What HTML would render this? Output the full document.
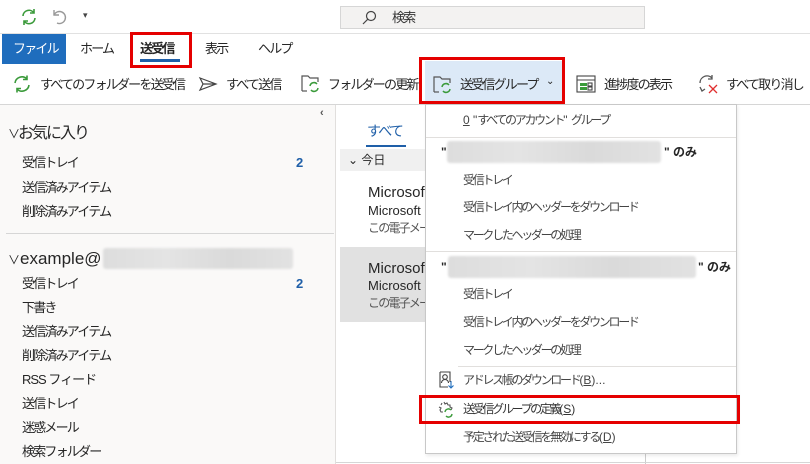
<!DOCTYPE html>
<html><head><meta charset="utf-8"><style>
*{margin:0;padding:0;box-sizing:border-box}
body{width:810px;height:464px;overflow:hidden;background:#fff;font-family:"Liberation Sans","Noto Sans CJK JP",sans-serif;color:#262626;position:relative;font-size:13px;letter-spacing:-1.8px}
.a{position:absolute;white-space:nowrap;line-height:1}
.m{font-size:12px;color:#444;letter-spacing:-2.3px}
.l{letter-spacing:0}
.blur{position:absolute;background:linear-gradient(90deg,#ddd,#e4e4e4,#dadada,#e2e2e2);border-radius:3px;filter:blur(1px)}
.sep{position:absolute;height:1px;background:#e1dfdd}
</style></head><body>
<svg class="a" style="left:19px;top:7px" width="20" height="20" viewBox="0 0 20 20" fill="none" stroke="#3a9a3a" stroke-width="1.6"><path d="M4 9a6 6 0 0 1 11-3M16 11a6 6 0 0 1-11 3"/><path d="M15 2v4h-4M5 18v-4h4"/></svg>
<svg class="a" style="left:50px;top:7px" width="18" height="18" viewBox="0 0 18 18" fill="none" stroke="#999" stroke-width="1.4"><path d="M4 3v5h5"/><path d="M4 8a6 6 0 1 1 3 8"/></svg>
<div class="a" style="left:83px;top:11px;font-size:9px;color:#444">▾</div>
<div class="a" style="left:340px;top:6px;width:305px;height:23px;background:#f3f2f1;border:1px solid #d6d6d6"></div>
<svg class="a" style="left:361px;top:10px" width="16" height="16" viewBox="0 0 16 16" fill="none" stroke="#444" stroke-width="1.2"><circle cx="10" cy="6" r="4.5"/><path d="M6.8 9.2L2 14"/></svg>
<div class="a" style="left:392px;top:11px;font-size:13px;color:#333">検索</div>
<div class="a" style="left:0;top:33px;width:810px;height:1px;background:#e1e1e1"></div>
<div class="a" style="left:2px;top:34px;width:64px;height:30px;background:#1f6dbd"></div>
<div class="a" style="left:13px;top:42px;font-size:13px;color:#fff">ファイル</div>
<div class="a" style="left:80px;top:42px">ホーム</div>
<div class="a" style="left:140px;top:42px;font-weight:bold">送受信</div>
<div class="a" style="left:140px;top:59px;width:40px;height:3px;background:#1f5fa8"></div>
<div class="a" style="left:130px;top:32px;width:62px;height:36px;border:3px solid #e50000"></div>
<div class="a" style="left:205px;top:42px">表示</div>
<div class="a" style="left:258px;top:42px">ヘルプ</div>
<svg class="a" style="left:12px;top:74px" width="20" height="20" viewBox="0 0 20 20" fill="none" stroke="#3a9a3a" stroke-width="1.6"><path d="M3 9a7 7 0 0 1 12-4M17 11a7 7 0 0 1-12 4"/><path d="M15 1.5v4h-4M5 18.5v-4h4"/></svg>
<div class="a" style="left:40px;top:78px">すべてのフォルダーを送受信</div>
<svg class="a" style="left:198px;top:76px" width="20" height="16" viewBox="0 0 20 16" fill="none" stroke="#444" stroke-width="1.2"><path d="M2 2l16 6-16 6 3-6z M5 8h13"/></svg>
<div class="a" style="left:226px;top:78px">すべて送信</div>
<svg class="a" style="left:301px;top:73px" width="20" height="20" viewBox="0 0 20 20" fill="none" stroke-width="1.2"><path d="M1 18V3h6l2 2h8v4" stroke="#555"/><path d="M1 18h5" stroke="#555"/><path d="M9 13a4 4 0 0 1 7-2M17 15a4 4 0 0 1-7 2" stroke="#3a9a3a" stroke-width="1.5"/></svg>
<div class="a" style="left:328px;top:78px">フォルダーの更新</div>
<div class="a" style="left:425px;top:61px;width:138px;height:42px;background:#dce9f7"></div>
<div class="a" style="left:419px;top:57px;width:146px;height:47px;border:3px solid #e50000"></div>
<svg class="a" style="left:433px;top:74px" width="20" height="20" viewBox="0 0 20 20" fill="none" stroke-width="1.2"><path d="M1 18V3h6l2 2h8v4" stroke="#555"/><path d="M1 18h5" stroke="#555"/><path d="M9 13a4 4 0 0 1 7-2M17 15a4 4 0 0 1-7 2" stroke="#3a9a3a" stroke-width="1.5"/></svg>
<div class="a" style="left:460px;top:78px">送受信グループ</div>
<div class="a" style="left:546px;top:77px;font-size:10px;letter-spacing:0">⌄</div>
<svg class="a" style="left:576px;top:75px" width="20" height="18" viewBox="0 0 20 18" fill="none" stroke="#444" stroke-width="1.1"><rect x="1" y="1" width="18" height="16"/><path d="M1 5h18"/><rect x="4" y="8" width="7" height="3" fill="#3a9a3a" stroke="none"/><rect x="4" y="12" width="7" height="3" fill="#3a9a3a" stroke="none"/><rect x="12" y="8" width="4" height="3"/><rect x="12" y="12" width="4" height="3"/></svg>
<div class="a" style="left:604px;top:78px">進捗度の表示</div>
<svg class="a" style="left:697px;top:73px" width="22" height="22" viewBox="0 0 22 22" fill="none" stroke-width="1.3"><path d="M3 10a7 7 0 0 1 12-5" stroke="#555"/><path d="M15 2v4h-4" stroke="#555"/><path d="M3 14l2 4 3-2" stroke="#555"/><path d="M12 12l8 8M20 12l-8 8" stroke="#e03030"/></svg>
<div class="a" style="left:726px;top:78px">すべて取り消し</div>
<div class="a" style="left:0;top:104px;width:810px;height:1px;background:#d6d6d6"></div>
<div class="a" style="left:0;top:105px;width:336px;height:359px;background:#faf9f8;border-right:1px solid #e1dfdd"></div>
<div class="a" style="left:320px;top:108px;font-size:11px;font-weight:bold;color:#555">‹</div>
<div class="a" style="left:8px;top:126px;font-size:16px;letter-spacing:-2px"><span style="font-size:12px">∨</span>お気に入り</div>
<div class="a" style="left:22px;top:156px">受信トレイ</div><div class="a" style="left:296px;top:156px;color:#1f5fa8;font-weight:bold">2</div>
<div class="a" style="left:22px;top:181px">送信済みアイテム</div>
<div class="a" style="left:22px;top:205px">削除済みアイテム</div>
<div class="sep" style="left:6px;top:233px;width:328px;background:#d6d6d6"></div>
<div class="a" style="left:8px;top:250px;font-size:17px;letter-spacing:0"><span style="font-size:12px">∨</span>example@</div>
<div class="blur" style="left:103px;top:248px;width:190px;height:21px"></div>
<div class="a" style="left:22px;top:277px">受信トレイ</div><div class="a" style="left:296px;top:277px;color:#1f5fa8;font-weight:bold">2</div>
<div class="a" style="left:22px;top:301px">下書き</div>
<div class="a" style="left:22px;top:325px">送信済みアイテム</div>
<div class="a" style="left:22px;top:349px">削除済みアイテム</div>
<div class="a" style="left:22px;top:373px;letter-spacing:-1px">RSS フィード</div>
<div class="a" style="left:22px;top:397px">送信トレイ</div>
<div class="a" style="left:22px;top:421px">迷惑メール</div>
<div class="a" style="left:22px;top:445px">検索フォルダー</div>
<div class="a" style="left:367px;top:124px;color:#1f5fa8;font-size:14px">すべて</div>
<div class="a" style="left:366px;top:145px;width:40px;height:2px;background:#1f5fa8"></div>
<div class="a" style="left:340px;top:149px;width:90px;height:22px;background:#f0f0f0"></div>
<div class="a" style="left:348px;top:154px;font-size:12px;letter-spacing:0">⌄ 今日</div>
<div class="a" style="left:368px;top:185px;font-size:15px;letter-spacing:0">Microsoft</div>
<div class="a" style="left:368px;top:204px;letter-spacing:0">Microsoft</div>
<div class="a" style="left:368px;top:222px;font-size:12px;color:#555">この電子メール</div>
<div class="a" style="left:340px;top:247px;width:90px;height:75px;background:#e1e1e1"></div>
<div class="a" style="left:368px;top:261px;font-size:15px;letter-spacing:0">Microsoft</div>
<div class="a" style="left:368px;top:279px;letter-spacing:0">Microsoft</div>
<div class="a" style="left:368px;top:297px;font-size:12px;color:#555">この電子メール</div>
<div class="a" style="left:645px;top:450px;width:1px;height:14px;background:#ccc"></div>
<div class="a" style="left:336px;top:462px;width:474px;height:1px;background:#d6d6d6"></div>
<div class="a" style="left:425px;top:104px;width:312px;height:350px;background:#fff;border:1px solid #c8c8c8;box-shadow:1px 2px 3px rgba(0,0,0,.08)"></div>
<div class="a m" style="left:463px;top:114px"><span class="l"><u>0</u> "</span>すべてのアカウント<span class="l">" </span>グループ</div>
<div class="sep" style="left:426px;top:137px;width:310px"></div>
<div class="a" style="left:441px;top:146px;font-weight:bold;font-size:12px">"</div>
<div class="blur" style="left:447px;top:141px;width:214px;height:22px"></div>
<div class="a" style="left:664px;top:146px;font-weight:bold;font-size:12px;letter-spacing:0">" のみ</div>
<div class="a m" style="left:463px;top:174px">受信トレイ</div>
<div class="a m" style="left:463px;top:201px">受信トレイ内のヘッダーをダウンロード</div>
<div class="a m" style="left:463px;top:229px">マークしたヘッダーの処理</div>
<div class="sep" style="left:426px;top:251px;width:310px"></div>
<div class="a" style="left:441px;top:261px;font-weight:bold;font-size:12px">"</div>
<div class="blur" style="left:448px;top:256px;width:248px;height:22px"></div>
<div class="a" style="left:698px;top:261px;font-weight:bold;font-size:12px;letter-spacing:0">" のみ</div>
<div class="a m" style="left:463px;top:288px">受信トレイ</div>
<div class="a m" style="left:463px;top:316px">受信トレイ内のヘッダーをダウンロード</div>
<div class="a m" style="left:463px;top:344px">マークしたヘッダーの処理</div>
<div class="sep" style="left:458px;top:366px;width:278px"></div>
<svg class="a" style="left:439px;top:371px" width="16" height="18" viewBox="0 0 16 18" fill="none" stroke="#444" stroke-width="1.1"><path d="M1 1h10v10M1 1v15h8"/><circle cx="6" cy="6" r="2.3"/><path d="M2.5 12a3.5 3.5 0 0 1 7 0"/><path d="M12 10v7M9.5 14.5l2.5 2.5 2.5-2.5" stroke="#1f6dbd"/></svg>
<div class="a m" style="left:463px;top:374px">アドレス帳のダウンロード<span class="l">(<u>B</u>)...</span></div>
<svg class="a" style="left:437px;top:400px" width="18" height="18" viewBox="0 0 18 18" fill="none" stroke="#555" stroke-width="1.1"><path d="M7 2l1 2 2-1 1 2 2 0 0 2 2 1-1 2M2 7l2 1-1 2 1 2 2 0M4 5l1-2"/><path d="M8 12a3.5 3.5 0 0 1 6-2M15 14a3.5 3.5 0 0 1-6 2" stroke="#3a9a3a" stroke-width="1.4"/></svg>
<div class="a m" style="left:463px;top:403px;color:#333">送受信グループの定義<span class="l">(<u>S</u>)</span></div>
<div class="a" style="left:419px;top:395px;width:321px;height:29px;border:3px solid #e50000"></div>
<div class="a m" style="left:463px;top:431px">予定された送受信を無効にする<span class="l">(<u>D</u>)</span></div>
</body></html>
